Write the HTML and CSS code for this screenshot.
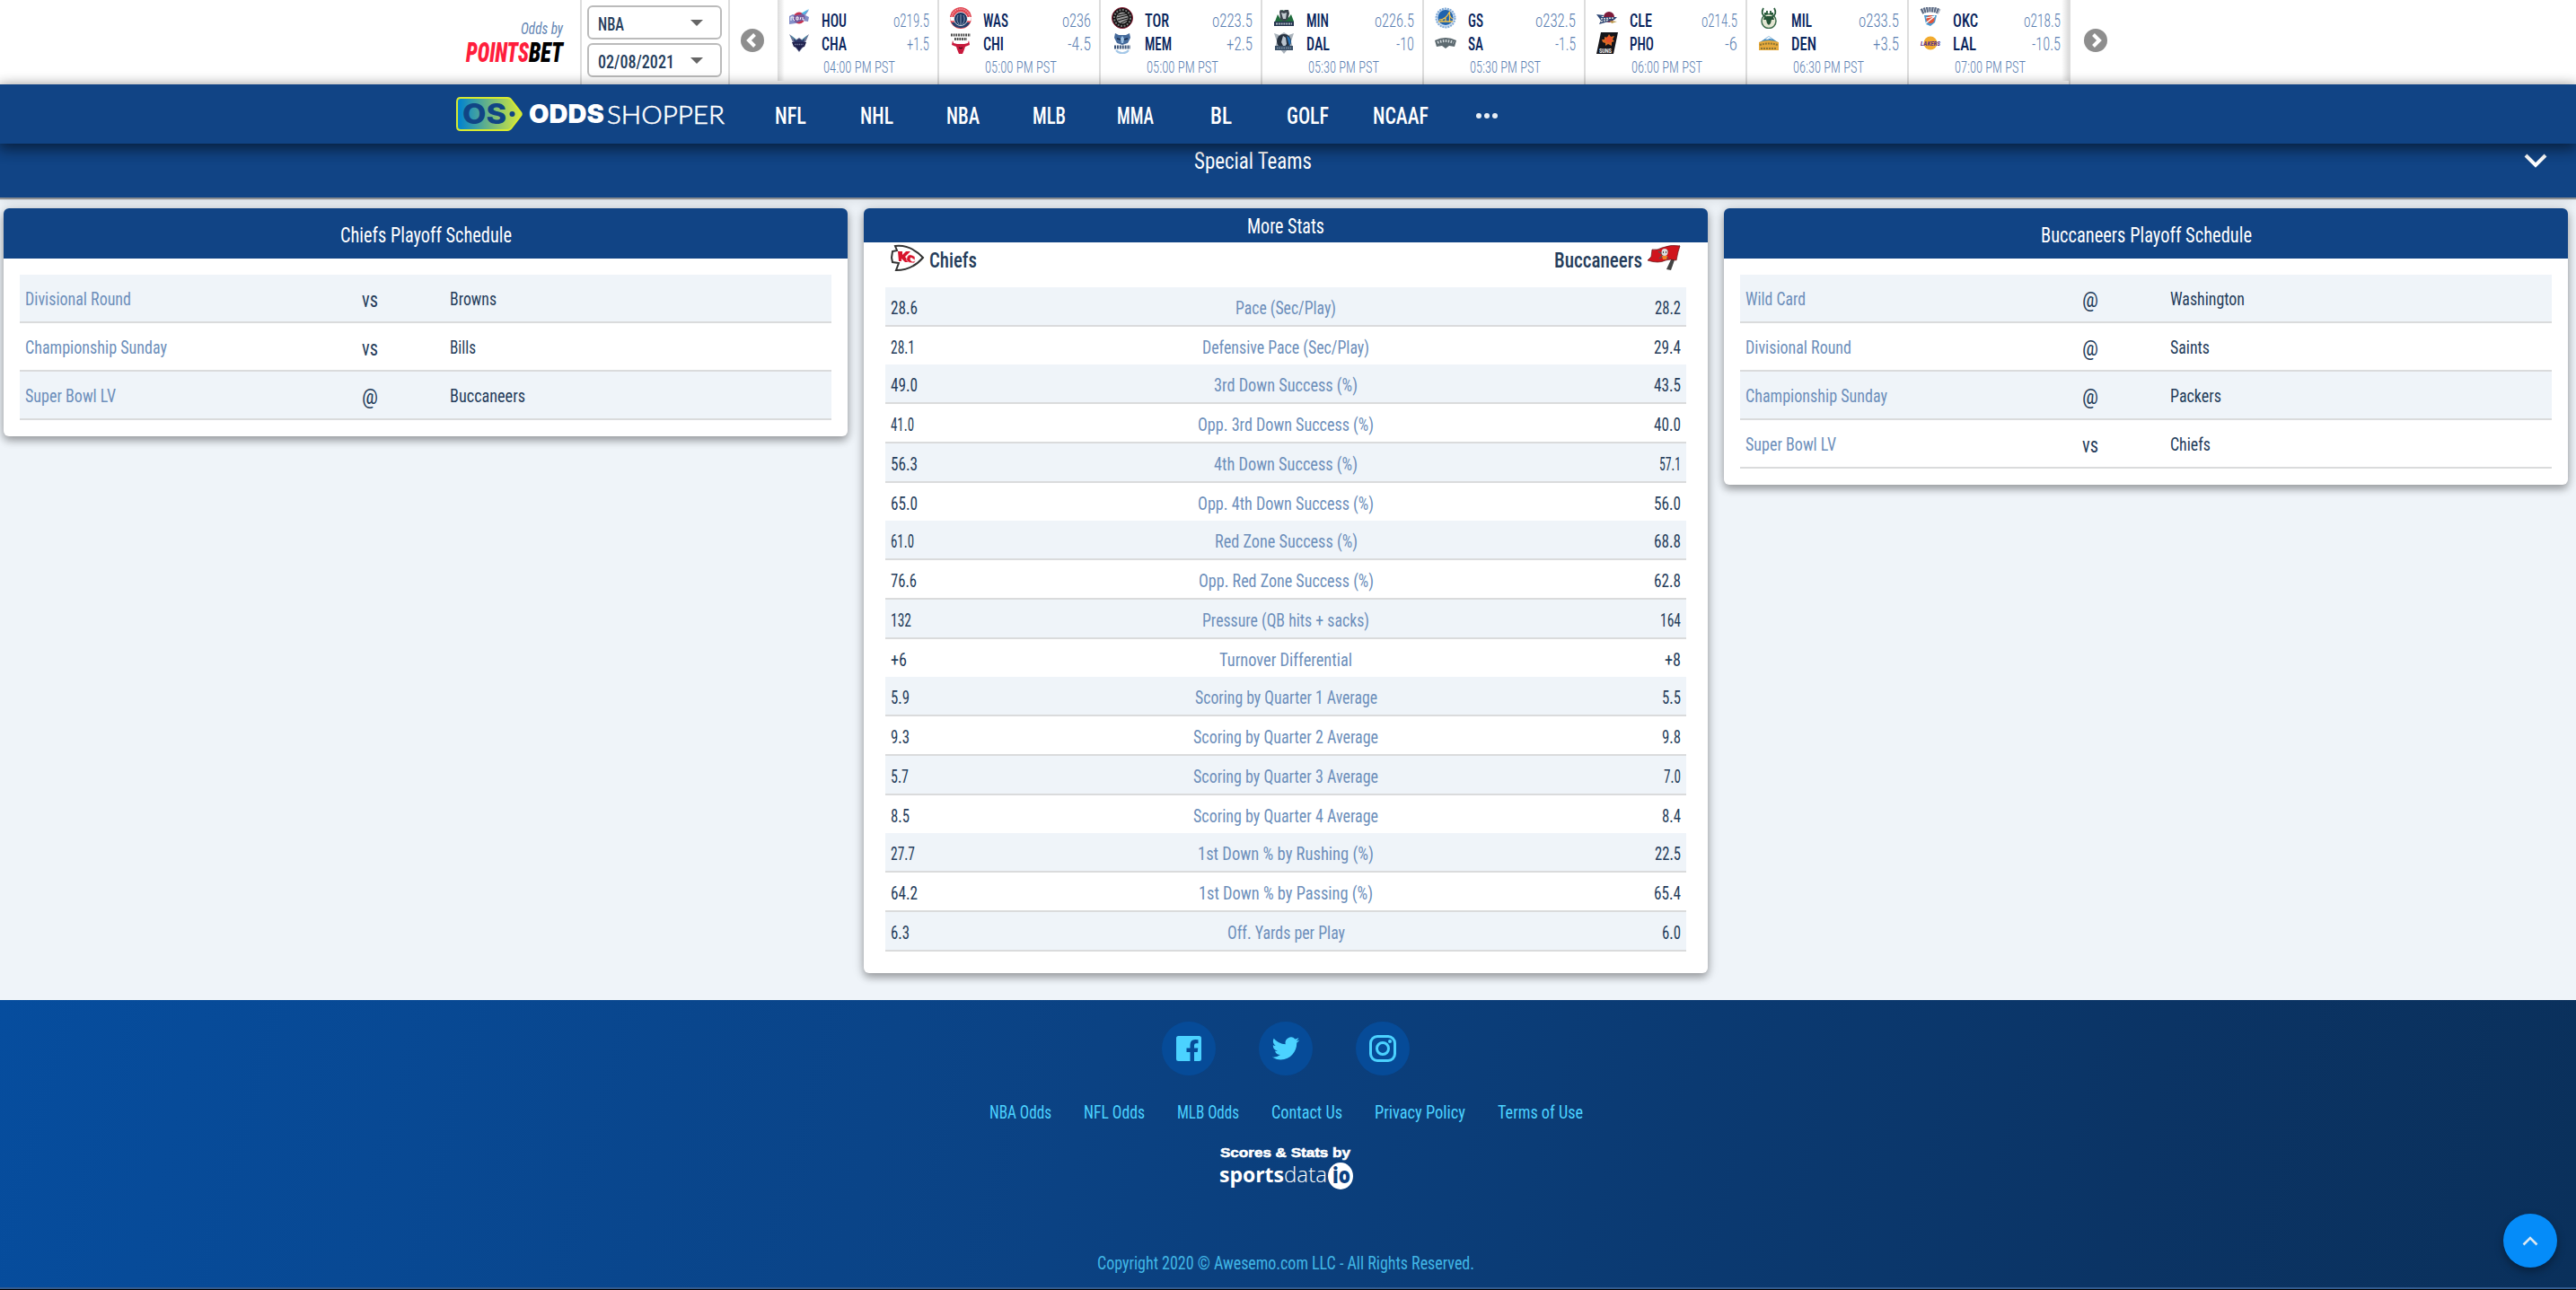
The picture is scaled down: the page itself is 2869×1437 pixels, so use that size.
FILE: index.html
```
<!DOCTYPE html>
<html lang="en">
<head>
<meta charset="utf-8">
<title>OddsShopper</title>
<link rel="stylesheet" href="styles.css">
</head>
<body>
<header class="topbar">
  <div class="sponsor">
    <div class="sponsor-by"><span data-w="47">Odds by</span></div>
    <div class="sponsor-name"><span data-w="70">POINTS</span><span class="bet" data-w="38">BET</span></div>
  </div>
  <div class="selects">
    <div class="select"><span data-w="29">NBA</span><i class="caret"></i></div>
    <div class="select"><span data-w="85">02/08/2021</span><i class="caret"></i></div>
  </div>
  <div class="arrow prev"><svg viewBox="0 0 26 26"><circle cx="13" cy="13" r="13"/><path d="M15.500 6.500L9 13l6.500 6.500"/></svg></div>
  <div class="ticker">
    <div class="game">
      <svg class="logo" viewBox="0 0 24 24"><circle cx="12" cy="12" r="6.500" fill="#c8324f"/><path d="M1 10l4-2 3 1 6-1 9-5-4 6 4 2-1 5-7-1-7 3-7 1z" fill="#5a68b5" opacity=".75"/><path d="M14 7l9-5-5 6z" fill="#4bb8e6"/><path d="M3 15v-4h3l-1 2 2 2M9 11h2v3H9zM14 11l-1 3M16 11v3h2" stroke="#fff" fill="none"/></svg>
      <b><span data-w="28">HOU</span></b><em><span data-w="40">o219.5</span></em>
      <svg class="logo" viewBox="0 0 24 24"><path d="M1 2l8 6 3-2 3 2 8-6-4 9-2 2-1 4-4 5-4-5-1-4-2-2z" fill="#6b7296"/><path d="M6 7l3 2 3-2 3 2 3-2-1 6H7z" fill="#2b3263"/><path d="M3 4l6 5M21 4l-6 5" stroke="#3c8ea5" fill="none"/><path d="M4 11h16l-2 5-3 1-3 4-3-4-3-1z" fill="#20214d"/><path d="M7 13.500h10" stroke="#7d86a8" stroke-width="1.500" stroke-dasharray="1 .7"/></svg>
      <b><span data-w="28">CHA</span></b><em><span data-w="25">+1.5</span></em>
      <time><span data-w="80">04:00 PM PST</span></time>
    </div>
    <div class="game">
      <svg class="logo" viewBox="0 0 24 24"><circle cx="12" cy="12" r="12" fill="#e04551"/><circle cx="12" cy="12" r="10" fill="none" stroke="#f0a0a6" stroke-width="1.500" stroke-dasharray="1.500 1"/><path d="M0 11h24l-.5 4H.5z" fill="#fff"/><path d="M1.500 17a12 12 0 0 0 21 0z" fill="#24406d"/><circle cx="12" cy="13" r="7.500" fill="#1c3761" stroke="#fff" stroke-width=".8"/><path d="M12 8v12M9 9c-2 4-1 7 1 10M15 9c2 4 1 7-1 10" stroke="#a9b8cc" stroke-width=".8" fill="none"/></svg>
      <b><span data-w="28">WAS</span></b><em><span data-w="32">o236</span></em>
      <svg class="logo" viewBox="0 0 24 24"><path d="M1 3h22M5 7.500h14" stroke="#444" stroke-width="3" stroke-dasharray="1.800 .9"/><path d="M3 9l1 3 4 1h8l4-1 1-3 1 5-5 2-1 3-2 5h-4l-2-5-1-3-5-2z" fill="#c8193c"/><path d="M10 17l2 1 2-1" stroke="#111" fill="none"/></svg>
      <b><span data-w="23">CHI</span></b><em><span data-w="26">-4.5</span></em>
      <time><span data-w="80">05:00 PM PST</span></time>
    </div>
    <div class="game">
      <svg class="logo" viewBox="0 0 24 24"><circle cx="12" cy="12" r="11.500" fill="#111" stroke="#8c1c34"/><circle cx="12" cy="12" r="9" fill="none" stroke="#777" stroke-width="2" stroke-dasharray="2 1.500"/><circle cx="12" cy="12" r="6.500" fill="#999"/><path d="M7 9l10-2M6 12l12-3M7 15l11-3M10 18l8-4" stroke="#111"/></svg>
      <b><span data-w="27">TOR</span></b><em><span data-w="45">o223.5</span></em>
      <svg class="logo" viewBox="0 0 24 24"><path d="M4 1l4 2h8l4-2 1 5-3 6-6 2-6-2-3-6z" fill="#456a9b"/><path d="M12 4l2 3-1 5h-2l-1-5z" fill="#9fc3e4"/><path d="M6 7l4 1M18 7l-4 1" stroke="#15294a" stroke-width="1.500"/><path d="M3 16.500h18" stroke="#3d5579" stroke-width="4" stroke-dasharray="2 .9"/><path d="M5 20a9 9 0 0 0 14 0" stroke="#a5c8e8" stroke-width="2" fill="none"/></svg>
      <b><span data-w="30">MEM</span></b><em><span data-w="29">+2.5</span></em>
      <time><span data-w="80">05:00 PM PST</span></time>
    </div>
    <div class="game">
      <svg class="logo" viewBox="0 0 24 24"><path d="M2 16l3-8 3 5V5l2-2 2 1 3-1 2 3v6l3-4 3 8z" fill="#1f6b3c"/><path d="M7 5l1-2 3 1 3-1 3 0 1 4-2 7-4 2-4-2z" fill="#3b444d"/><path d="M9 6l3 1 3-1-1 7h-3z" fill="#c3cbd2"/><path d="M1 16h22v5H1z" fill="#26354f"/><path d="M3 18.500h18" stroke="#a9b3c0" stroke-width="2" stroke-dasharray="2 .8"/></svg>
      <b><span data-w="25">MIN</span></b><em><span data-w="44">o226.5</span></em>
      <svg class="logo" viewBox="0 0 24 24"><path d="M1 1l6 2 5-3 5 3 6-2-3 9 2 8-6 1-4 5-4-5-6-1 2-8z" fill="#aab3bb"/><circle cx="12" cy="10" r="8" fill="#26313f"/><path d="M11 4l3 2 1 7-3 4-3-6z" fill="#b9c4ce"/><path d="M15 4a7 7 0 0 1 3 11z" fill="#2773b8"/><path d="M2 15h20v5H2z" fill="#3a5068"/><path d="M4 17.500h16" stroke="#8195a8" stroke-width="1.500" stroke-dasharray="1.500 1"/></svg>
      <b><span data-w="26">DAL</span></b><em><span data-w="20">-10</span></em>
      <time><span data-w="79">05:30 PM PST</span></time>
    </div>
    <div class="game">
      <svg class="logo" viewBox="0 0 24 24"><circle cx="12" cy="12" r="10.500" fill="#cbdcf0" stroke="#7fa9d6" stroke-width="2" stroke-dasharray="2 1"/><circle cx="12" cy="11.500" r="8.500" fill="#1f63ae"/><path d="M4 16h16M16.500 5v12M5 14q7 0 11-8 1 6 4 7M8 16v-3M12 16v-5" stroke="#f2c14a" stroke-width="1.300" fill="none"/></svg>
      <b><span data-w="17">GS</span></b><em><span data-w="45">o232.5</span></em>
      <svg class="logo" viewBox="0 0 24 24"><path d="M0 9q12-6 24 0l-2 7-6-1-4 3-4-3-6 1z" fill="#5d6a70"/><path d="M3 11.500q9-4 18 0" stroke="#cfd6d9" stroke-width="3" stroke-dasharray="1.500 1.500" fill="none"/></svg>
      <b><span data-w="17">SA</span></b><em><span data-w="23">-1.5</span></em>
      <time><span data-w="79">05:30 PM PST</span></time>
    </div>
    <div class="game">
      <svg class="logo" viewBox="0 0 24 24"><circle cx="14" cy="11" r="6" fill="#7d1c3b"/><path d="M0 8l9 1-4 2 18 0-3 3-17 5 2-4-2-3z" fill="#2d4674"/><path d="M5 13l14-1M5 16l9-2" stroke="#ddd" stroke-width="1.500" stroke-dasharray="2 1"/><path d="M15 15l8 1-6 2z" fill="#b99646"/></svg>
      <b><span data-w="25">CLE</span></b><em><span data-w="40">o214.5</span></em>
      <svg class="logo" viewBox="0 0 24 24"><path d="M5 0h19l-5 24H0z" fill="#15151a"/><path d="M7 11l-1-3 3 0 0-3 3 1 2-4 2 3 4-1-2 4 2 2-3 1 0 4-4-2-3 2 0-3z" fill="#d96a24"/><circle cx="14" cy="8" r="3.500" fill="#e8502a"/><text x="3" y="22.500" font-size="6.500" font-weight="700" textLength="14" fill="#e8e8e8">SUNS</text></svg>
      <b><span data-w="27">PHO</span></b><em><span data-w="14">-6</span></em>
      <time><span data-w="79">06:00 PM PST</span></time>
    </div>
    <div class="game">
      <svg class="logo" viewBox="0 0 24 24"><circle cx="12" cy="15.500" r="8" fill="#e4e6d2" stroke="#3b6b4b" stroke-width="1.500"/><path d="M7 11l3-1h4l3 1 1 3-3 0-1 4-2 2-2-2-1-4-3 0z" fill="#245236"/><path d="M9 11Q2 8 6 1M15 11q7-3 3-10M7 7l3 0 0-3M17 7l-3 0 0-3" stroke="#285a3a" stroke-width="1.800" fill="none"/></svg>
      <b><span data-w="23">MIL</span></b><em><span data-w="45">o233.5</span></em>
      <svg class="logo" viewBox="0 0 24 24"><path d="M2 11l6-4 4-3 4 3 6 4z" fill="#3c86bf"/><path d="M8 8l4-4 4 4-3-1-2 1z" fill="#e8f2fa"/><path d="M1 11q11-4 22 0v9H1z" fill="#e5a93c"/><path d="M2 14q10-3 20 0M3 18h18" stroke="#8c7434" stroke-width="2" stroke-dasharray="2 1" fill="none"/></svg>
      <b><span data-w="28">DEN</span></b><em><span data-w="29">+3.5</span></em>
      <time><span data-w="79">06:30 PM PST</span></time>
    </div>
    <div class="game">
      <svg class="logo" viewBox="0 0 24 24"><path d="M2 5q10-5 20 0" stroke="#5b6a84" stroke-width="6" stroke-dasharray="2.200 .7" fill="none"/><path d="M5 9h14l-2 8-5 4-5-2z" fill="#4b9ad0"/><circle cx="12" cy="13.500" r="4.500" fill="#e2553b"/><path d="M7 12l10-2-9 7M3 22l6-6" stroke="#fff" stroke-width="1.200" fill="none"/></svg>
      <b><span data-w="28">OKC</span></b><em><span data-w="41">o218.5</span></em>
      <svg class="logo" viewBox="0 0 24 24"><circle cx="12" cy="12" r="7.500" fill="#f2ab2e"/><text x="1" y="15" font-size="7" font-weight="700" font-style="italic" textLength="22" lengthAdjust="spacingAndGlyphs" fill="#5b2f86">LAKERS</text></svg>
      <b><span data-w="26">LAL</span></b><em><span data-w="32">-10.5</span></em>
      <time><span data-w="79">07:00 PM PST</span></time>
    </div>
  </div>
  <div class="arrow next"><svg viewBox="0 0 26 26"><circle cx="13" cy="13" r="13"/><path d="M10.500 6.500L17 13l-6.500 6.500"/></svg></div>
</header>

<nav class="nav">
  <div class="brand">
    <svg class="tag" viewBox="0 0 76 40">
      <defs><linearGradient id="tagfill"><stop offset=".05" stop-color="#0785cb"/><stop offset=".75" stop-color="#a4d05c"/><stop offset="1" stop-color="#d5e83c"/></linearGradient></defs>
      <path d="M6 2H58q3 0 5 3l10 13q1.500 2 0 4L63 35q-2 3-5 3H6q-4 0-4-4V6q0-4 4-4z" fill="url(#tagfill)" stroke="#d8ea30" stroke-width="2"/>
      <text x="8" y="31" font-size="31" font-weight="800" textLength="49" lengthAdjust="spacingAndGlyphs" fill="#114485">OS</text>
      <circle cx="63.500" cy="20" r="3" fill="#114485"/>
    </svg>
    <strong><span data-w="84">ODDS</span></strong><small><span data-w="131">SHOPPER</span></small>
  </div>
  <a><span data-w="35">NFL</span></a>
  <a><span data-w="37">NHL</span></a>
  <a><span data-w="37">NBA</span></a>
  <a><span data-w="37">MLB</span></a>
  <a><span data-w="41">MMA</span></a>
  <a><span data-w="24">BL</span></a>
  <a><span data-w="47">GOLF</span></a>
  <a class="wide"><span data-w="62">NCAAF</span></a>
  <a class="more"><i></i><i></i><i></i></a>
</nav>

<section class="accordion">
  <h2><span data-w="131">Special Teams</span></h2>
  <svg viewBox="0 0 26 16"><path d="M2 2l11 11L24 2"/></svg>
</section>

<main class="cards">
  <section class="card">
    <h3><span data-w="191">Chiefs Playoff Schedule</span></h3>
    <ul class="schedule">
      <li><span class="round"><span data-w="118">Divisional Round</span></span><span class="at"><span data-w="18">vs</span></span><span class="team"><span data-w="52">Browns</span></span></li>
      <li><span class="round"><span data-w="158">Championship Sunday</span></span><span class="at"><span data-w="18">vs</span></span><span class="team"><span data-w="29">Bills</span></span></li>
      <li><span class="round"><span data-w="101">Super Bowl LV</span></span><span class="at"><span data-w="18">@</span></span><span class="team"><span data-w="84">Buccaneers</span></span></li>
    </ul>
  </section>

  <section class="card stats">
    <h3><span data-w="86">More Stats</span></h3>
    <div class="versus">
      <svg viewBox="0 0 38 30"><path d="M5 2Q22 0 36 15 24 29 6 29l3-8-7-1-1-5 1-7 5-1z" fill="#fff" stroke="#333" stroke-width="2"/><path d="M8 8h5v4l4-4h5l-6 6 5 6h-5l-4-4v3H9z" fill="#d8142d"/><path d="M27 14q-7-5-9 1t8 6l2-3q-5 3-6-1t5 1z" fill="#d8142d" stroke="#fff" stroke-width=".6"/></svg>
      <b><span data-w="53">Chiefs</span></b>
      <b class="away"><span data-w="98">Buccaneers</span></b>
      <svg viewBox="0 0 38 30"><path d="M37 1l-10 28-5-1L33 4z" fill="#444"/><path d="M37 2q-2 5-4 16-7-2-12 0-8 4-20 0l4-4 1-8q6 1 11-2 10-4 20-2z" fill="#d0141c" stroke="#5a1519" stroke-width=".7"/><path d="M13 8l11 8M24 7l-10 9" stroke="#555" stroke-width="1.500"/><ellipse cx="20" cy="9" rx="3.500" ry="4" fill="#ddd"/><path d="M17 13h6l-1 4h-4z" fill="#f08228"/><path d="M18 9h1M21 9h1" stroke="#222" stroke-width="1.500"/></svg>
    </div>
    <ul class="table">
      <li><b><span data-w="30">28.6</span></b><em><span data-w="112">Pace (Sec/Play)</span></em><b><span data-w="29">28.2</span></b></li>
      <li class="flush"><b><span data-w="27">28.1</span></b><em><span data-w="186">Defensive Pace (Sec/Play)</span></em><b><span data-w="30">29.4</span></b></li>
      <li><b><span data-w="30">49.0</span></b><em><span data-w="160">3rd Down Success (%)</span></em><b><span data-w="30">43.5</span></b></li>
      <li><b><span data-w="26">41.0</span></b><em><span data-w="196">Opp. 3rd Down Success (%)</span></em><b><span data-w="30">40.0</span></b></li>
      <li><b><span data-w="30">56.3</span></b><em><span data-w="160">4th Down Success (%)</span></em><b><span data-w="24">57.1</span></b></li>
      <li class="flush"><b><span data-w="30">65.0</span></b><em><span data-w="196">Opp. 4th Down Success (%)</span></em><b><span data-w="30">56.0</span></b></li>
      <li><b><span data-w="26">61.0</span></b><em><span data-w="159">Red Zone Success (%)</span></em><b><span data-w="30">68.8</span></b></li>
      <li><b><span data-w="29">76.6</span></b><em><span data-w="195">Opp. Red Zone Success (%)</span></em><b><span data-w="30">62.8</span></b></li>
      <li><b><span data-w="23">132</span></b><em><span data-w="186">Pressure (QB hits + sacks)</span></em><b><span data-w="23">164</span></b></li>
      <li class="flush"><b><span data-w="18">+6</span></b><em><span data-w="148">Turnover Differential</span></em><b><span data-w="18">+8</span></b></li>
      <li><b><span data-w="21">5.9</span></b><em><span data-w="203">Scoring by Quarter 1 Average</span></em><b><span data-w="21">5.5</span></b></li>
      <li><b><span data-w="21">9.3</span></b><em><span data-w="206">Scoring by Quarter 2 Average</span></em><b><span data-w="21">9.8</span></b></li>
      <li><b><span data-w="20">5.7</span></b><em><span data-w="206">Scoring by Quarter 3 Average</span></em><b><span data-w="19">7.0</span></b></li>
      <li class="flush"><b><span data-w="21">8.5</span></b><em><span data-w="206">Scoring by Quarter 4 Average</span></em><b><span data-w="21">8.4</span></b></li>
      <li><b><span data-w="27">27.7</span></b><em><span data-w="196">1st Down % by Rushing (%)</span></em><b><span data-w="29">22.5</span></b></li>
      <li><b><span data-w="30">64.2</span></b><em><span data-w="194">1st Down % by Passing (%)</span></em><b><span data-w="30">65.4</span></b></li>
      <li><b><span data-w="21">6.3</span></b><em><span data-w="131">Off. Yards per Play</span></em><b><span data-w="21">6.0</span></b></li>
    </ul>
  </section>

  <section class="card">
    <h3><span data-w="235">Buccaneers Playoff Schedule</span></h3>
    <ul class="schedule">
      <li><span class="round"><span data-w="67">Wild Card</span></span><span class="at"><span data-w="18">@</span></span><span class="team"><span data-w="83">Washington</span></span></li>
      <li><span class="round"><span data-w="118">Divisional Round</span></span><span class="at"><span data-w="18">@</span></span><span class="team"><span data-w="44">Saints</span></span></li>
      <li><span class="round"><span data-w="158">Championship Sunday</span></span><span class="at"><span data-w="18">@</span></span><span class="team"><span data-w="57">Packers</span></span></li>
      <li><span class="round"><span data-w="101">Super Bowl LV</span></span><span class="at"><span data-w="18">vs</span></span><span class="team"><span data-w="45">Chiefs</span></span></li>
    </ul>
  </section>
</main>

<footer class="footer">
  <div class="social">
    <a><svg viewBox="0 0 60 60"><path d="M18.500 16h23q2.500 0 2.500 2.500v23q0 2.500-2.500 2.500H36V34h3.700l.6-4.500H36v-3q0-2.200 2.200-2.200h2.300v-4q-1.200-.3-3.300-.3-5.700 0-5.700 6v3.500H27.500V34h4v10h-13Q16 44 16 41.500v-23Q16 16 18.500 16z"/></svg></a>
    <a><svg viewBox="0 0 60 60"><g transform="translate(14.600 14.600) scale(1.280)"><path d="M23.950 4.570a10 10 0 0 1-2.820.77 4.960 4.960 0 0 0 2.160-2.720 9.900 9.900 0 0 1-3.120 1.190 4.920 4.920 0 0 0-8.380 4.480A13.930 13.930 0 0 1 1.640 3.160a4.920 4.920 0 0 0 1.520 6.570 4.900 4.900 0 0 1-2.230-.61v.06a4.920 4.920 0 0 0 3.950 4.830 5 5 0 0 1-2.210.08 4.940 4.940 0 0 0 4.600 3.420A9.870 9.870 0 0 1 0 19.540a14 14 0 0 0 7.550 2.210c9.050 0 14-7.500 14-13.980 0-.21 0-.42-.02-.63a9.940 9.940 0 0 0 2.460-2.550z"/></g></svg></a>
    <a><svg viewBox="0 0 60 60"><rect x="16.500" y="16.500" width="27" height="27" rx="7.500" class="line"/><circle cx="30" cy="30" r="6.500" class="line"/><circle cx="38" cy="22" r="2"/></svg></a>
  </div>
  <div class="links">
    <a><span data-w="69">NBA Odds</span></a>
    <a><span data-w="68">NFL Odds</span></a>
    <a><span data-w="69">MLB Odds</span></a>
    <a><span data-w="79">Contact Us</span></a>
    <a><span data-w="101">Privacy Policy</span></a>
    <a><span data-w="95">Terms of Use</span></a>
  </div>
  <div class="data-by">
    <div class="scores"><span data-w="145">Scores &amp; Stats by</span></div>
    <div class="sdio"><b><span data-w="72">sports</span></b><span class="thin"><span data-w="48">data</span></span><i><span data-w="20">io</span></i></div>
  </div>
  <p class="copyright"><span data-w="420">Copyright 2020 © Awesemo.com LLC - All Rights Reserved.</span></p>
</footer>
<a class="to-top"><svg viewBox="0 0 18 11"><path d="M1.500 9.500L9 2l7.500 7.500"/></svg></a>
<script src="condense.js"></script>
</body>
</html>
```
FILE: styles.css
```
* { box-sizing: border-box; }
html, body { margin: 0; height: 1437px; overflow: hidden; }
body {
  background: #eff4f9;
  font-family: "Roboto Condensed", Roboto, "Liberation Sans", sans-serif;
  font-stretch: 75%;
  font-weight: 400;
  color: #253d5b;
}
h2, h3, ul, p { margin: 0; padding: 0; }
ul { list-style: none; }
b, em, small, strong, i, time { font-weight: inherit; font-style: normal; }

/* condense.js squeezes these to their set width */
[data-w] { display: inline-block; white-space: nowrap; transform-origin: left center; }

/* odds bar */
.topbar { display: flex; height: 94px; background: #fff; }
.sponsor { width: 648px; border-right: 2px solid #ddd; padding: 21px 19px 0 0; text-align: right; }
.sponsor-by { font-size: 19px; line-height: 22px; font-style: italic; color: #6385b3; }
.sponsor-name { font: italic 900 31px/32px "Roboto Condensed", Roboto, sans-serif; font-stretch: 75%; color: #ff1e3c; }
.sponsor-name .bet { color: #000; }
.selects { width: 165px; border-right: 2px solid #ddd; padding: 6px 0 0 6px; display: flex; flex-direction: column; gap: 4px; }
.select {
  width: 150px; height: 38px; border: 2px solid #bbb; border-radius: 6px;
  padding: 4px 19px 0 10px; display: flex; align-items: center; justify-content: space-between;
  font-size: 21px; font-weight: 500; line-height: 30px;
}
.caret { border: 7px solid transparent; border-top-color: #666; border-bottom: 0; margin-bottom: 3px; }
.arrow { width: 53px; padding: 32px 0 0 12px; }
.arrow.next { padding-left: 15px; }
.arrow svg { width: 26px; height: 26px; fill: #8e8e8e; display: block; }
.arrow path { fill: none; stroke: #fff; stroke-width: 4; }
.ticker { display: flex; width: 1440px; position: relative; }
.ticker::before, .ticker::after { content: ""; position: absolute; top: 0; bottom: 4px; width: 8px; }
.ticker::before { left: 0; background: linear-gradient(90deg, #dcdcdc, transparent); }
.ticker::after { right: 2px; background: linear-gradient(270deg, #dcdcdc, transparent); }
.game {
  width: 180px; border-right: 2px solid #ddd; padding: 8px 9px 0 12px;
  display: grid; grid-template-columns: 24px 1fr auto; grid-template-rows: 24px 24px 22px;
  column-gap: 13px; row-gap: 4px; align-content: start;
}
.logo { width: 24px; height: 24px; display: block; }
.game b { font-size: 21px; font-weight: 500; line-height: 30px; color: #08245c; }
.game em { font-size: 21px; font-weight: 300; line-height: 30px; color: #5b80b2; text-align: right; }
.game b:nth-of-type(2), .game em:nth-of-type(2) { line-height: 26px; }
.game time { grid-column: 2 / 4; font-size: 18.500px; font-weight: 300; line-height: 23px; color: #5b80b2; padding-left: 2px; }

/* navigation */
.nav {
  height: 66px; background: #114485; display: flex; position: relative; z-index: 2;
  box-shadow: 0 3px 14px 2px rgba(0, 0, 0, .32), 0 6px 16px rgba(0, 0, 0, .3);
}
.brand { width: 832px; padding-left: 507px; display: flex; align-items: center; color: #fff; }
.tag { width: 76px; height: 40px; margin-right: 6px; font-family: Inter, sans-serif; font-stretch: 100%; }
.brand strong { font: 900 28px/40px Inter, sans-serif; width: 87px; }
.brand small { font: 300 28px/40px Lato, sans-serif; -webkit-text-stroke: .6px #fff; }
.nav a { width: 96px; padding-top: 4px; font-size: 26px; font-weight: 500; line-height: 63px; color: #fff; text-align: center; }
.nav .wide { width: 111px; }
.nav .more { width: 82px; display: flex; gap: 3px; align-items: center; justify-content: center; }
.more i { width: 6px; height: 6px; border-radius: 50%; background: #e8eef5; }

.accordion {
  height: 60px; background: #114485; display: flex; justify-content: space-between; padding: 0 32px 0 1330px;
  box-shadow: 0 2px 1px rgba(0, 0, 0, .38), 0 3px 12px rgba(0, 0, 0, .1); color: #fff; position: relative;
}
.accordion h2 { font-size: 26px; font-weight: 400; line-height: 38px; }
.accordion svg { width: 26px; height: 16px; margin-top: 11px; fill: none; stroke: #fff; stroke-width: 4; }

/* cards */
.cards { display: flex; gap: 18px; align-items: flex-start; padding: 12px 0 30px 4px; height: 894px; }
.card {
  width: 940px; background: #fff; border-radius: 6px; overflow: hidden; padding-bottom: 18px;
  box-shadow: 0 5px 8px rgba(0, 0, 0, .28), 0 1px 14px rgba(0, 0, 0, .18);
}
.card h3 { height: 56px; background: #114485; color: #fff; text-align: center; font-size: 23.500px; font-weight: 400; line-height: 60px; }
.schedule { margin: 18px 18px 0; border: 0; }
.schedule li { display: flex; height: 54px; border-bottom: 2px solid #dadbdc; padding: 2px 0 0 6px; font-size: 20.500px; line-height: 51px; }
.schedule li:nth-child(odd), .table li:nth-child(odd) { background: #eff4f9; }
.round { width: 375px; color: #6d8fbb; }
.at { width: 98px; font-size: 23.500px; line-height: 53px; }
.stats { padding-bottom: 24px; }
.stats h3 { height: 38px; line-height: 40px; }
.versus { display: flex; height: 50px; padding: 2px 30px 0; font-size: 24px; font-weight: 500; line-height: 37px; }
.versus svg { width: 38px; height: 30px; }
.versus b { margin: 0 5px; }
.versus .away { margin-left: auto; }
.table { margin: 0 24px; }
.table li { display: flex; justify-content: space-between; height: 44px; border-bottom: 2px solid #dadbdc; padding: 3px 6px 0; font-size: 20.500px; line-height: 40px; }
.table .flush { height: 42px; border-bottom: 0; }
.table b { width: 80px; }
.table b:last-child { text-align: right; }
.table em { color: #6d8fbb; }

/* footer */
.footer {
  height: 323px; background: linear-gradient(105deg, #064d9e 0%, #0b4283 42%, #0b3465 82%, #0a305b 100%);
  border-bottom: 1px solid #000; box-shadow: inset 0 -2px #335b8e;
  display: flex; flex-direction: column; align-items: center; padding: 24px 5px 0 0; color: #4bd2ff;
}
.social { display: flex; gap: 48px; }
.social a { width: 60px; height: 60px; border-radius: 50%; background: #064b98; }
.social svg { width: 60px; height: 60px; fill: #4bd2ff; display: block; }
.social .line { fill: none; stroke: #4bd2ff; stroke-width: 3; }
.links { display: flex; gap: 36px; margin-top: 26px; font-size: 20.500px; line-height: 30px; }
.data-by { color: #fff; margin-top: 19px; width: 150px; height: 76px; padding-left: 2px; }
.scores { font: 700 15.500px/22px "Liberation Sans", Arial, sans-serif; -webkit-text-stroke: .6px #fff; }
.sdio { display: flex; font-family: "Open Sans", sans-serif; font-stretch: 100%; font-size: 24px; line-height: 26px; margin: 0 0 0 -1px; }
.sdio b { font-weight: 700; }
.sdio .thin { font-weight: 300; }
.sdio i { width: 30px; height: 30px; border-radius: 50%; background: #fff; color: #0b4080; font-weight: 800; line-height: 28px; margin-left: 1px; padding-left: 5px; }
.copyright { margin-top: 43px; font-size: 21px; line-height: 30px; color: #41b7e6; }

.to-top {
  position: absolute; left: 2788px; top: 1352px; width: 60px; height: 60px; border-radius: 50%;
  background: #058cf9; display: flex; align-items: center; justify-content: center;
  box-shadow: 0 4px 10px rgba(0, 0, 0, .35);
}
.to-top svg { width: 18px; height: 11px; fill: none; stroke: #dbe7f0; stroke-width: 2.600; }
```
FILE: condense.js
```
// Squeeze each label horizontally to its data-w width, keeping its place in the flow.
document.querySelectorAll('[data-w]').forEach(function (el) {
  var target = Number(el.dataset.w);
  var natural = el.getBoundingClientRect().width;
  el.style.transform = 'scaleX(' + target / natural + ')';
  el.style.marginRight = (target - natural) + 'px';
});
```
